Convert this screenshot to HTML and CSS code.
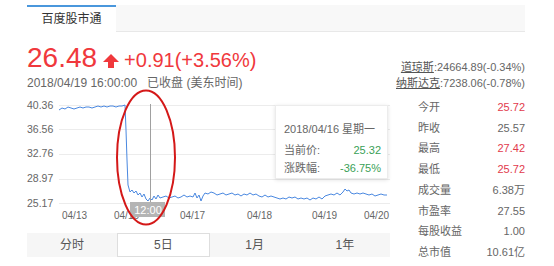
FILE: index.html
```html
<!DOCTYPE html>
<html lang="zh">
<head>
<meta charset="utf-8">
<title>百度股市通</title>
<link rel="stylesheet" href="styles.css">
</head>
<body>
<div class="page">
  <div class="tabbar">
    <div class="tab active">百度股市通</div>
  </div>

  <div class="header">
    <div class="quote">
      <div class="price-line">
        <span class="price">26.48</span>
        <svg class="arrow" width="16" height="14" viewBox="0 0 16 14"><path d="M8 0 L16 8 L11 8 L11 14 L5 14 L5 8 L0 8 Z" fill="#f0383c"/></svg>
        <span class="change">+0.91(+3.56%)</span>
      </div>
      <div class="time">2018/04/19 16:00:00&nbsp;&nbsp;&nbsp;已收盘 (美东时间)</div>
    </div>
    <div class="indices">
      <div><span class="idx-name">道琼斯</span>:24664.89(-0.34%)</div>
      <div><span class="idx-name">纳斯达克</span>:7238.06(-0.78%)</div>
    </div>
  </div>

  <div class="main">
    <div class="chart-col">
      <div class="chart">
        <svg class="chart-svg" width="363" height="141" viewBox="27 92 363 141">
          <g class="grid" stroke="#ececec" stroke-width="1">
            <line x1="59" y1="105.5" x2="390" y2="105.5"/>
            <line x1="59" y1="129.5" x2="390" y2="129.5"/>
            <line x1="59" y1="154.5" x2="390" y2="154.5"/>
            <line x1="59" y1="179.5" x2="390" y2="179.5"/>
            <line x1="59" y1="203.5" x2="390" y2="203.5"/>
          </g>
          <g class="ylab">
            <text x="27" y="109">40.36</text>
            <text x="27" y="133">36.56</text>
            <text x="27" y="157">32.76</text>
            <text x="27" y="182">28.97</text>
            <text x="27" y="207">25.17</text>
          </g>
          <g class="xlab">
            <text x="62" y="219">04/13</text>
            <text x="114" y="219">04/16</text>
            <text x="180" y="219">04/17</text>
            <text x="247" y="219">04/18</text>
            <text x="312" y="219">04/19</text>
            <text x="364" y="219">04/20</text>
          </g>
          <polyline class="price-line-path" fill="none" stroke="#4a88e0" stroke-width="1" points="59,110 62,108 65,109 68,107 71,108 74,109 77,108 80,107 83,108 86,107 89,107 92,108 95,107 98,106 101,107 104,106 107,107 110,106 113,106 116,107 119,106 122,106 125,105 126,130 127,160 128,185 130,192 132,190 134,193 136,191 138,195 140,193 142,197 144,194 146,199 148,201 150,198 152,200 154,196 156,199 158,195 160,198 163,197 166,196 169,198 172,197 175,196 178,198 181,197 184,195 187,197 190,196 193,197 195,193 197,198 199,195 201,201 203,196 205,193 208,194 211,192 214,193 217,195 220,194 223,193 226,195 229,194 232,193 235,195 238,194 241,196 244,194 247,195 250,193 253,195 256,194 259,196 262,197 265,195 268,197 271,196 274,197 277,198 280,199 283,198 286,199 289,197 292,198 295,197 298,199 301,198 304,199 307,198 310,200 313,198 316,199 319,197 322,199 325,196 328,195 331,194 334,195 337,193 340,195 343,192 345,189 347,191 349,190 351,193 354,194 357,193 360,194 363,193 366,194 369,195 372,194 375,196 378,195 381,194 384,195 387,195"/>
          <line x1="150.5" y1="104" x2="150.5" y2="203" stroke="#a0a0a0" stroke-width="1"/>
          <rect x="130" y="202" width="35" height="15" fill="#b4b4b4"/>
          <text class="cross-label" x="148" y="213.5" text-anchor="middle">12:00</text>
          <ellipse cx="146" cy="157.5" rx="29" ry="67" fill="none" stroke="#d41818" stroke-width="2"/>
        </svg>
        <div class="tooltip">
          <div class="tip-title">2018/04/16 星期一</div>
          <div class="tip-row"><span>当前价:</span><span class="green">25.32</span></div>
          <div class="tip-row"><span>涨跌幅:</span><span class="green">-36.75%</span></div>
        </div>
      </div>
      <div class="periods">
        <div class="period">分时</div>
        <div class="period active">5日</div>
        <div class="period">1月</div>
        <div class="period">1年</div>
      </div>
    </div>

    <div class="stats">
      <div class="stat"><span>今开</span><span class="red">25.72</span></div>
      <div class="stat"><span>昨收</span><span>25.57</span></div>
      <div class="stat"><span>最高</span><span class="red">27.42</span></div>
      <div class="stat"><span>最低</span><span class="red">25.72</span></div>
      <div class="stat"><span>成交量</span><span>6.38万</span></div>
      <div class="stat"><span>市盈率</span><span>27.55</span></div>
      <div class="stat"><span>每股收益</span><span>1.00</span></div>
      <div class="stat"><span>总市值</span><span>10.61亿</span></div>
    </div>
  </div>
</div>
</body>
</html>
```

FILE: styles.css
```css
html, body {
  margin: 0;
  padding: 0;
  background: #fff;
}
body {
  font-family: "Liberation Sans", "Noto Sans CJK SC", sans-serif;
  color: #555;
}
.page {
  width: 498px;
  padding: 5px 0 0 27px;
}
.tabbar {
  display: flex;
  height: 26px;
  background: #f8f8f8;
  border-bottom: 1px solid #e8e8e8;
}
.tab {
  width: 89px;
  font-size: 12px;
  color: #333;
  text-align: center;
  line-height: 24px;
}
.tab.active {
  background: #fff;
  border-top: 2px solid #4a97dc;
  margin-bottom: -1px;
}
.header {
  display: flex;
  justify-content: space-between;
  align-items: flex-end;
  margin-top: 10px;
}
.price-line {
  display: flex;
  align-items: baseline;
  height: 32px;
  color: #f0383c;
}
.price {
  font-size: 28px;
  line-height: 32px;
}
.arrow {
  margin: 0 5px 0 6px;
  align-self: center;
  position: relative;
  top: 3px;
}
.change {
  font-size: 20px;
  line-height: 32px;
}
.time {
  font-size: 12px;
  line-height: 14px;
  margin-top: 2px;
  color: #666;
}
.indices {
  font-size: 11px;
  line-height: 16px;
  text-align: right;
  color: #666;
  margin-bottom: -1px;
}
.idx-name {
  text-decoration: underline;
  color: #555;
}
.main {
  display: flex;
  margin-top: 2px;
}
.chart-col {
  width: 363px;
}
.chart {
  position: relative;
  height: 141px;
}
.chart-svg {
  display: block;
  overflow: visible;
}
.ylab text {
  font-size: 10.5px;
  fill: #666;
}
.xlab text {
  font-size: 10px;
  fill: #666;
}
.cross-label {
  font-size: 11px;
  fill: #fff;
}
.tooltip {
  position: absolute;
  left: 248px;
  top: 13px;
  width: 113px;
  height: 74px;
  box-sizing: border-box;
  background: #fff;
  border: 1px solid #ececec;
  box-shadow: 0 1px 4px rgba(0, 0, 0, 0.12);
  padding: 16px 6px 0 8px;
  font-size: 11px;
  color: #666;
}
.tip-title {
  line-height: 14px;
  margin-bottom: 5px;
}
.tip-row {
  display: flex;
  justify-content: space-between;
  line-height: 18px;
}
.green {
  color: #3a9f57;
}
.periods {
  display: flex;
  height: 24px;
  background: #f6f6f6;
}
.period {
  flex: 1;
  text-align: center;
  font-size: 12px;
  line-height: 24px;
  color: #555;
}
.period.active {
  background: #fff;
  border: 1px solid #dedede;
  line-height: 22px;
}
.stats {
  width: 107px;
  margin-left: 28px;
  padding-top: 5px;
  font-size: 11px;
}
.stat {
  display: flex;
  justify-content: space-between;
  line-height: 20.7px;
  color: #666;
}
.red {
  color: #e23a4c;
}
```
